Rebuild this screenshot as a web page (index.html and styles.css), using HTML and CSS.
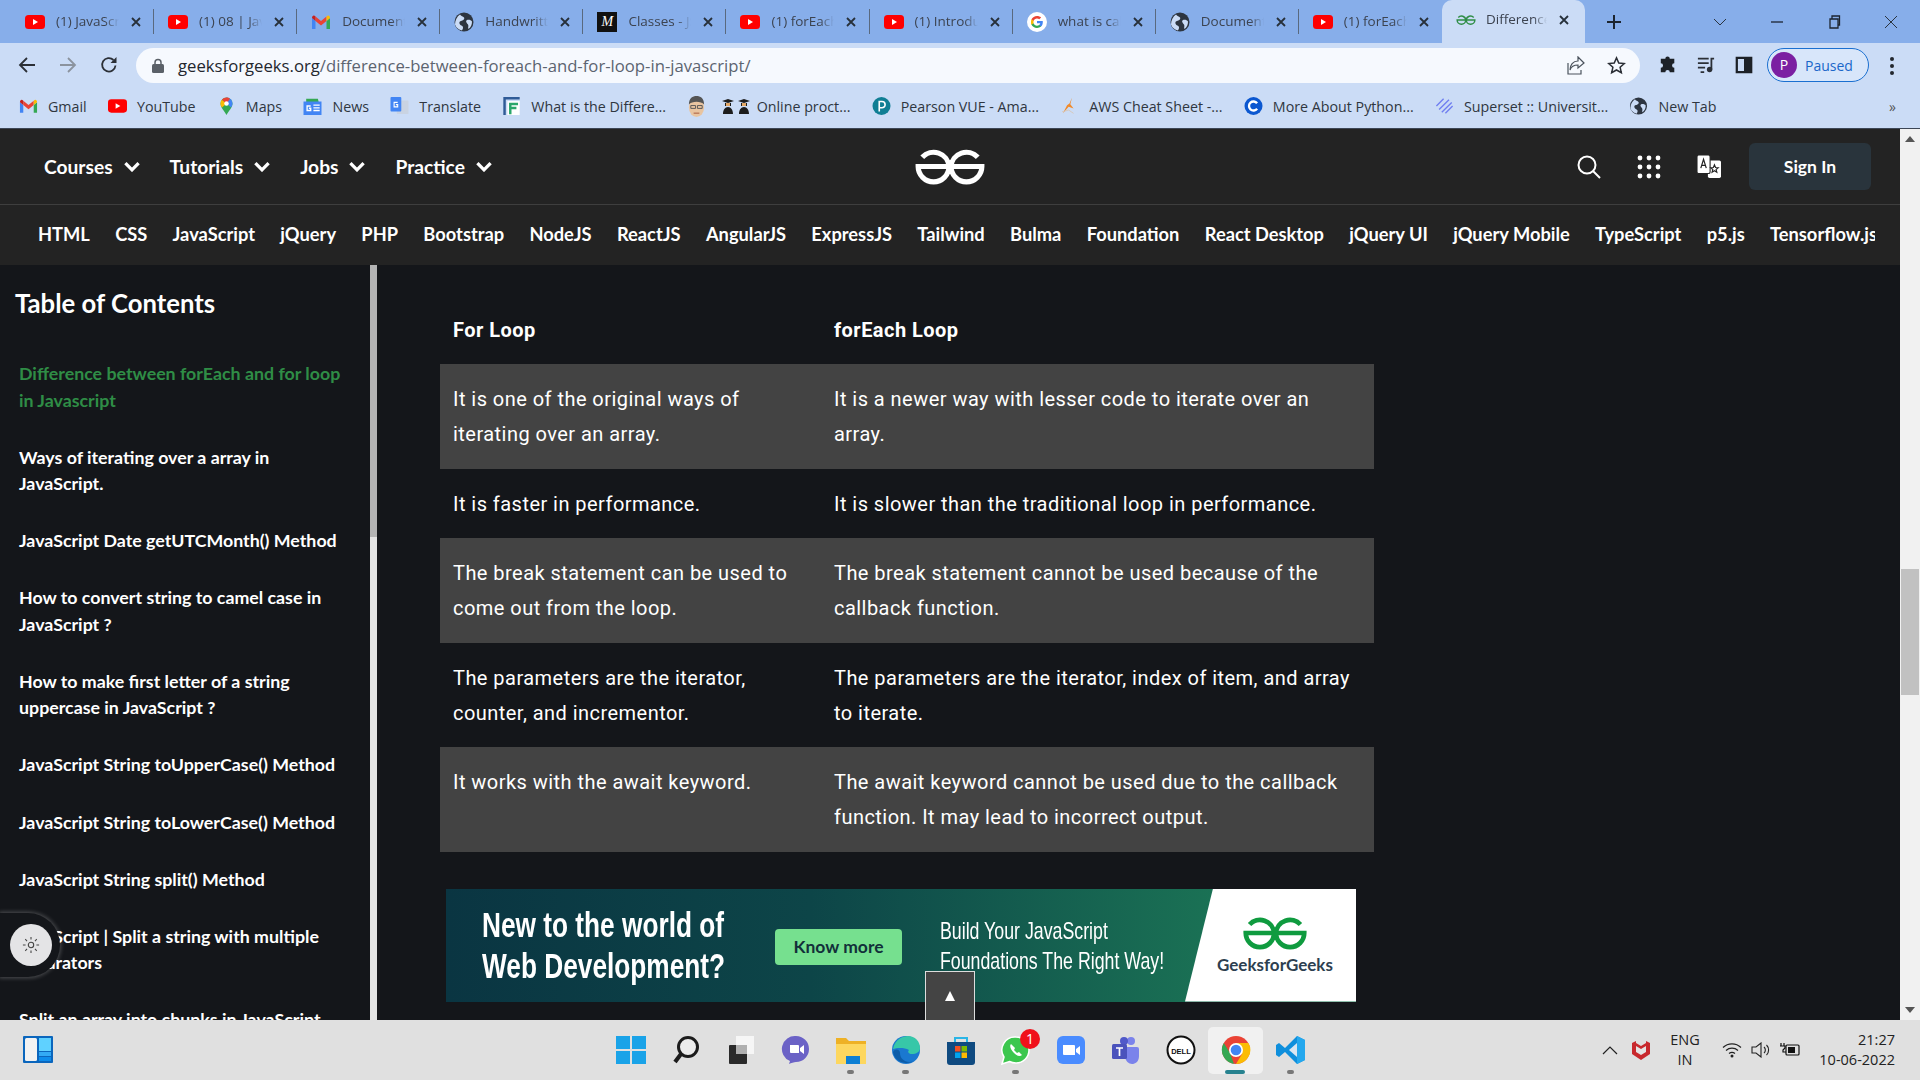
FILE: index.html
```html
<!DOCTYPE html>
<html lang="en">
<head>
<meta charset="utf-8">
<title>Difference between forEach and for loop in Javascript</title>
<link rel="stylesheet" href="styles.css">
</head>
<body>
<svg class="defs" aria-hidden="true">
  <defs>
    <symbol id="yt" viewBox="0 0 20 14"><rect width="20" height="14" rx="3.5" fill="#f00"/><path d="M8 4l5 3-5 3z" fill="#fff"/></symbol>
    <symbol id="gmail" viewBox="0 0 20 16"><path d="M1 4v11h3.5V7z" fill="#4285f4"/><path d="M19 4v11h-3.5V7z" fill="#34a853"/><path d="M15.500 2.500L10 7 4.500 2.500 4.500 7 10 11.500 15.500 7z" fill="#ea4335"/><path d="M1 4c0-2.500 2-3.500 3.500-1.500v4.500z" fill="#c5221f"/><path d="M19 4c0-2.500-2-3.500-3.500-1.500v4.500z" fill="#fbbc04"/></symbol>
    <symbol id="globe" viewBox="0 0 20 20"><circle cx="10" cy="10" r="9.500" fill="#2d3540"/><path d="M6 2.500c1 2 3 1.500 4 3s-1 3-3 3.500-2 2-1 3.500 3 1 3 3-1 2-1 3c-3-.5-6-3-7-6 0-4 2-8 5-10zM13 8c2-.5 4 0 5 1.500 0 3-1 5.500-3.500 7.500-1-1 .5-3-.5-4.500s-3-3-1-4.500z" fill="#cbdcf6"/></symbol>
    <symbol id="gfg" viewBox="0 0 70 36"><path d="M62 9A15 15 0 0 0 36 18 15 15 0 0 0 66 18H36M8 9A15 15 0 0 1 34 18 15 15 0 0 1 4 18H34" fill="none" stroke="currentColor" stroke-width="5"/></symbol>
    <symbol id="close" viewBox="0 0 12 12"><path d="M2 2l8 8M10 2l-8 8" stroke="#27303a" stroke-width="1.800" fill="none"/></symbol>
    <symbol id="chev" viewBox="0 0 16 10"><path d="M2 2l6 6 6-6" stroke="#fff" stroke-width="3" fill="none"/></symbol>
  </defs>
</svg>
<div class="window">
  <header class="tabstrip">
    <div class="tab"><svg class="fav"><use href="#yt"/></svg><span class="title">(1) JavaScript</span><svg class="x"><use href="#close"/></svg></div>
    <div class="tab"><svg class="fav"><use href="#yt"/></svg><span class="title">(1) 08 | JavaS</span><svg class="x"><use href="#close"/></svg></div>
    <div class="tab"><svg class="fav"><use href="#gmail"/></svg><span class="title">Document</span><svg class="x"><use href="#close"/></svg></div>
    <div class="tab"><svg class="fav"><use href="#globe"/></svg><span class="title">Handwritten</span><svg class="x"><use href="#close"/></svg></div>
    <div class="tab"><span class="fav-m">M</span><span class="title">Classes - JS</span><svg class="x"><use href="#close"/></svg></div>
    <div class="tab"><svg class="fav"><use href="#yt"/></svg><span class="title">(1) forEach</span><svg class="x"><use href="#close"/></svg></div>
    <div class="tab"><svg class="fav"><use href="#yt"/></svg><span class="title">(1) Introduc</span><svg class="x"><use href="#close"/></svg></div>
    <div class="tab"><svg class="fav" viewBox="0 0 20 20"><circle cx="10" cy="10" r="10" fill="#fff"/><path d="M15.800 10.200c0-.5 0-.9-.1-1.300H10v2.400h3.300c-.2.800-.6 1.400-1.200 1.800v1.500h2c1.100-1.100 1.700-2.600 1.700-4.400z" fill="#4285f4"/><path d="M10 16c1.600 0 3-.5 4.100-1.400l-2-1.500c-.6.400-1.300.6-2.100.6-1.600 0-3-1-3.400-2.500H4.500v1.600C5.500 14.700 7.600 16 10 16z" fill="#34a853"/><path d="M6.600 11.200c-.2-.8-.2-1.600 0-2.400V7.200H4.500c-.7 1.500-.7 4.100 0 5.600z" fill="#fbbc05"/><path d="M10 6.400c.9 0 1.700.3 2.300.9L14.100 5.500C13 4.500 11.600 4 10 4 7.600 4 5.500 5.300 4.500 7.200l2.100 1.600C7 7.400 8.400 6.400 10 6.400z" fill="#ea4335"/></svg><span class="title">what is call</span><svg class="x"><use href="#close"/></svg></div>
    <div class="tab"><svg class="fav"><use href="#globe"/></svg><span class="title">Document</span><svg class="x"><use href="#close"/></svg></div>
    <div class="tab last"><svg class="fav"><use href="#yt"/></svg><span class="title">(1) forEach</span><svg class="x"><use href="#close"/></svg></div>
    <div class="tab active"><svg class="fav gfgfav"><use href="#gfg"/></svg><span class="title">Difference</span><svg class="x"><use href="#close"/></svg></div>
    <svg class="newtab" viewBox="0 0 16 16"><path d="M8 1v14M1 8h14" stroke="#1c2530" stroke-width="2"/></svg>
    <div class="winctl">
      <svg class="wc wc-drop" viewBox="0 0 14 8"><path d="M1 1l6 6 6-6" stroke="#2a3440" fill="none"/></svg>
      <svg class="wc wc-min" viewBox="0 0 14 8"><path d="M1 4h12" stroke="#1c2530" stroke-width="1.300"/></svg>
      <svg class="wc wc-max" viewBox="0 0 14 14"><path d="M3 4h8v9H3zM5 4V1h7.500v9H11" stroke="#1c2530" stroke-width="1.300" fill="none"/></svg>
      <svg class="wc wc-close" viewBox="0 0 14 14"><path d="M1 1l12 12M13 1L1 13" stroke="#2a3440" fill="none"/></svg>
    </div>
  </header>

  <div class="toolbar">
    <svg class="tb-btn" viewBox="0 0 18 18"><path d="M17 9H2M9 2L2 9l7 7" stroke="#2b2f36" stroke-width="1.800" fill="none"/></svg>
    <svg class="tb-btn dim" viewBox="0 0 18 18"><path d="M1 9h15M9 2l7 7-7 7" stroke="#8b939e" stroke-width="1.800" fill="none"/></svg>
    <svg class="tb-btn" viewBox="0 0 18 18"><path d="M15.500 9.500A6.700 6.700 0 1 1 13.500 4" stroke="#2b2f36" stroke-width="1.800" fill="none"/><path d="M16.500 1v6h-6z" fill="#2b2f36"/></svg>
    <div class="omnibox">
      <svg class="lock" viewBox="0 0 12 15"><path d="M3 7V4.500a3 3 0 0 1 6 0V7" stroke="#5a6068" stroke-width="1.500" fill="none"/><rect y="6" width="12" height="9" rx="1.500" fill="#5a6068"/></svg>
      <span class="url"><b>geeksforgeeks.org</b>/difference-between-foreach-and-for-loop-in-javascript/</span>
      <svg class="omni-ic" viewBox="0 0 20 20"><path d="M12 1l6 6-6 5V9C7 9 5 11 4 14c0-5 3-9 8-9zM2 7v11h13v-4" stroke="#4a525c" stroke-width="1.200" fill="none"/></svg>
      <svg class="omni-ic star" viewBox="0 0 20 20"><path d="M10 2l2.400 5.400 5.800.6-4.400 3.900 1.300 5.700L10 14.700l-5.100 2.900 1.300-5.700L1.800 8l5.800-.6z" stroke="#2b2f36" stroke-width="1.600" fill="none"/></svg>
    </div>
    <svg class="tb-ext" viewBox="0 0 20 20"><path d="M7 3a2.500 2.500 0 0 1 5 0h5v5a2.500 2.500 0 0 0 0 5v5h-5a2.500 2.500 0 0 0-5 0H2v-5a2.500 2.500 0 0 0 0-5V3z" fill="#1d2127"/></svg>
    <svg class="tb-ext" viewBox="0 0 20 20"><path d="M1 3h12M1 8h12M1 13h8M4 18h4" stroke="#2b2f36" stroke-width="2" fill="none"/><path d="M15 3h4M16 3v12" stroke="#2b2f36" stroke-width="2"/><circle cx="14" cy="15" r="3" fill="#2b2f36"/></svg>
    <svg class="tb-ext" viewBox="0 0 20 20"><path d="M2 2h16v16H2z" stroke="#1d2127" stroke-width="2.500" fill="none"/><rect x="10" y="2" width="8" height="16" fill="#1d2127"/></svg>
    <div class="profile"><span class="avatar">P</span><span class="paused">Paused</span></div>
    <div class="menu"><i></i><i></i><i></i></div>
  </div>

  <nav class="bookmarks">
    <span class="bm"><svg class="bi"><use href="#gmail"/></svg>Gmail</span>
    <span class="bm"><svg class="bi"><use href="#yt"/></svg>YouTube</span>
    <span class="bm"><svg class="bi" viewBox="0 0 18 24"><path d="M9 24C6 18 1 14 1 8.500a8 8 0 0 1 16 0C17 14 12 18 9 24z" fill="#34a853"/><path d="M9 .5a8 8 0 0 1 8 8c0 2-.8 3.700-2 5.500L9 8.500z" fill="#4285f4"/><path d="M3 3.500L9 8.500 3 14C1.500 12 1 10 1 8.500c0-2 .8-3.700 2-5z" fill="#fbbc04"/><path d="M3 3.500C4.500 1.500 6.500.5 9 .5c2 0 3.500.7 4.700 1.800L9 8.500z" fill="#ea4335"/><circle cx="9" cy="8.500" r="3" fill="#fff"/></svg>Maps</span>
    <span class="bm"><svg class="bi" viewBox="0 0 20 20"><path d="M3 2h13l1 4H3z" fill="#34a853"/><rect y="5" width="20" height="15" fill="#4285f4"/><path d="M11 9h7M11 12h7M11 15h7" stroke="#fff" stroke-width="1.500"/><path d="M8 10H4v5h4v-2.500H6" stroke="#fff" stroke-width="1.500" fill="none"/></svg>News</span>
    <span class="bm"><svg class="bi" viewBox="0 0 20 20"><rect x="7" y="4" width="13" height="15" rx="1" fill="#c9d3e2"/><rect width="12" height="16" rx="1" fill="#4285f4"/><path d="M8 6H4v5h4V8.500H6" stroke="#fff" stroke-width="1.200" fill="none"/></svg>Translate</span>
    <span class="bm"><svg class="bi" viewBox="0 0 20 22"><path d="M0 0h20v3H3v19H0z" fill="#2f5b97"/><path d="M5 5h15v17H5z" fill="#fff"/><path d="M7 7h11v3h-8v2h6v3h-6v6H7z" fill="#2aa66b"/></svg>What is the Differe...</span>
    <span class="bm"><svg class="face" viewBox="0 0 20 24"><ellipse cx="10" cy="13" rx="8" ry="10" fill="#e8c4a0"/><path d="M2 10C2 3 6 1 10 1s8 2 8 9c-3-4-13-4-16 0z" fill="#555"/><path d="M4 11h5v3H4zM11 11h5v3h-5z" fill="none" stroke="#555"/><path d="M7 19h6" stroke="#a4553a"/></svg></span>
    <span class="bm tight"><svg class="grad" viewBox="0 0 30 16"><path d="M1 3l6-2 6 2-6 2zM4 5h6v3H4zM2 16c0-4 2-7 5-7s5 3 5 7zM17 3l6-2 6 2-6 2zM20 5h6v3h-6zM18 16c0-4 2-7 5-7s5 3 5 7z" fill="#1d1d1d"/><path d="M5 5h4v3H5zM21 5h4v3h-4z" fill="#e3a867"/></svg>Online proct...</span>
    <span class="bm"><svg class="bi" viewBox="0 0 20 20"><circle cx="10" cy="10" r="10" fill="#107e94"/><path d="M7.500 16V5h3a3.500 3.500 0 0 1 0 7H8" stroke="#fff" stroke-width="1.800" fill="none"/></svg>Pearson VUE - Ama...</span>
    <span class="bm"><svg class="bi" viewBox="0 0 20 22"><path d="M13 1l-2 8 4 5-6-2-7 8 5-10 3-2z" fill="#f08a2b"/><path d="M1 18l8-2 6 4" stroke="#d8c4b0" fill="none"/></svg>AWS Cheat Sheet -...</span>
    <span class="bm"><svg class="bi" viewBox="0 0 20 20"><circle cx="10" cy="10" r="10" fill="#0b57d0"/><path d="M14 7a5 5 0 1 0 0 6" stroke="#fff" stroke-width="2.600" fill="none"/></svg>More About Python...</span>
    <span class="bm"><svg class="bi" viewBox="0 0 20 20"><path d="M1 10l8-8M4 14L15 3M7 17L18 6M11 18l8-8" stroke="#6f7ef0" stroke-width="1.500" fill="none"/></svg>Superset :: Universit...</span>
    <span class="bm"><svg class="bi"><use href="#globe"/></svg>New Tab</span>
    <span class="bm-more">»</span>
  </nav>

  <div class="page">
    <div class="site">
      <div class="nav">
        <div class="nav-left">
          <span class="nav-item">Courses<svg class="chev"><use href="#chev"/></svg></span>
          <span class="nav-item">Tutorials<svg class="chev"><use href="#chev"/></svg></span>
          <span class="nav-item">Jobs<svg class="chev"><use href="#chev"/></svg></span>
          <span class="nav-item">Practice<svg class="chev"><use href="#chev"/></svg></span>
        </div>
        <svg class="logo"><use href="#gfg"/></svg>
        <div class="nav-right">
          <svg class="nav-ic" viewBox="0 0 24 24"><circle cx="10" cy="10" r="8.500" stroke="#fff" stroke-width="2" fill="none"/><path d="M16 16l7 7" stroke="#fff" stroke-width="2"/></svg>
          <svg class="nav-ic" viewBox="0 0 24 24" fill="#fff"><circle cx="3" cy="3" r="2.400"/><circle cx="12" cy="3" r="2.400"/><circle cx="21" cy="3" r="2.400"/><circle cx="3" cy="12" r="2.400"/><circle cx="12" cy="12" r="2.400"/><circle cx="21" cy="12" r="2.400"/><circle cx="3" cy="21" r="2.400"/><circle cx="12" cy="21" r="2.400"/><circle cx="21" cy="21" r="2.400"/></svg>
          <svg class="nav-ic trans" viewBox="0 0 22 22"><rect x="10" y="5" width="12" height="16" rx="1.500" fill="#fff"/><rect width="12" height="17" rx="1.500" fill="#fff" stroke="#232323"/><path d="M3.500 12L6 4l2.500 8M4.500 9.500h3" stroke="#232323" stroke-width="1.100" fill="none"/><path d="M16 9l1 2.500 2.500.2-2 1.600.7 2.500-2.200-1.400-2.200 1.400.7-2.500-2-1.600 2.500-.2z" fill="none" stroke="#232323"/></svg>
          <span class="signin">Sign In</span>
        </div>
      </div>
      <div class="subnav">
        <div class="subnav-in">
          <span>HTML</span><span>CSS</span><span>JavaScript</span><span>jQuery</span><span>PHP</span><span>Bootstrap</span><span>NodeJS</span><span>ReactJS</span><span>AngularJS</span><span>ExpressJS</span><span>Tailwind</span><span>Bulma</span><span>Foundation</span><span>React Desktop</span><span>jQuery UI</span><span>jQuery Mobile</span><span>TypeScript</span><span>p5.js</span><span>Tensorflow.js</span>
        </div>
      </div>
      <div class="body">
        <aside class="toc">
          <div class="toc-list">
            <h2>Table of Contents</h2>
            <a class="cur">Difference between forEach and for loop in Javascript</a>
            <a>Ways of iterating over a array in JavaScript.</a>
            <a>JavaScript Date getUTCMonth() Method</a>
            <a>How to convert string to camel case in JavaScript ?</a>
            <a>How to make first letter of a string uppercase in JavaScript ?</a>
            <a>JavaScript String toUpperCase() Method</a>
            <a>JavaScript String toLowerCase() Method</a>
            <a>JavaScript String split() Method</a>
            <a>JavaScript | Split a string with multiple separators</a>
            <a>Split an array into chunks in JavaScript</a>
          </div>
          <div class="toc-track"><div class="toc-thumb"></div></div>
        </aside>
        <main class="article">
          <table class="cmp">
            <thead><tr><th>For Loop</th><th>forEach Loop</th></tr></thead>
            <tbody>
              <tr><td>It is one of the original ways of iterating over an array.</td><td>It is a newer way with lesser code to iterate over an array.</td></tr>
              <tr><td>It is faster in performance.</td><td>It is slower than the traditional loop in performance.</td></tr>
              <tr><td>The break statement can be used to come out from the loop.</td><td>The break statement cannot be used because of the callback function.</td></tr>
              <tr><td>The parameters are the iterator, counter, and incrementor.</td><td>The parameters are the iterator, index of item, and array to iterate.</td></tr>
              <tr><td>It works with the await keyword.</td><td>The await keyword cannot be used due to the callback function. It may lead to incorrect output.</td></tr>
            </tbody>
          </table>
          <div class="banner">
            <div class="b-head">New to the world of<br>Web Development?</div>
            <div class="b-btn">Know more</div>
            <div class="b-sub">Build Your JavaScript<br>Foundations The Right Way!</div>
            <div class="b-brand"><svg class="b-logo"><use href="#gfg"/></svg><span>GeeksforGeeks</span></div>
          </div>
          <div class="totop"><svg viewBox="0 0 12 12"><path d="M6 1l5 10H1z" fill="#fff"/></svg></div>
        </main>
      </div>
      <div class="theme"><span class="theme-knob"><svg viewBox="0 0 20 20"><circle cx="10" cy="10" r="3" fill="none" stroke="#444" stroke-width="1.200"/><path d="M10 1v3M10 16v3M1 10h3M16 10h3M3.600 3.600l2 2M14.400 14.400l2 2M3.600 16.400l2-2M14.400 5.600l2-2" stroke="#444" stroke-width="1.200"/></svg></span></div>
    </div>
    <div class="pagebar">
      <svg class="arrow" viewBox="0 0 10 6"><path d="M5 0l5 6H0z" fill="#555"/></svg>
      <div class="pagebar-track"><div class="pagebar-thumb"></div></div>
      <svg class="arrow" viewBox="0 0 10 6"><path d="M5 6L0 0h10z" fill="#555"/></svg>
    </div>
  </div>

  <footer class="taskbar">
    <svg class="widgets" viewBox="0 0 30 27"><rect width="30" height="27" rx="1" fill="#0b66bd"/><rect x="2" y="2" width="12" height="23" rx="1.500" fill="#f2f2f2"/><rect x="16" y="2" width="12" height="13" fill="#5fd1ff"/><rect x="16" y="16" width="12" height="4" fill="#33aaf5"/><rect x="16" y="21" width="12" height="4" fill="#0e8ceb"/></svg>
    <div class="tb-apps">
      <span class="app"><svg viewBox="0 0 30 30"><path d="M0 1h14v13H0zM16 1h14v13H16zM0 16h14v13H0zM16 16h14v13H16z" fill="#1aa3e8"/></svg></span>
      <span class="app"><svg viewBox="0 0 30 30"><circle cx="17" cy="12" r="9.500" stroke="#1c1c1c" stroke-width="3" fill="#fff" fill-opacity=".4"/><path d="M10 19l-6 8" stroke="#1c1c1c" stroke-width="4"/></svg></span>
      <span class="app"><svg viewBox="0 0 30 30"><rect x="10" y="1" width="18" height="18" fill="#f6f6f6"/><rect x="3" y="10" width="18" height="19" rx="1" fill="#2a2a2a"/><rect x="10" y="10" width="11" height="9" fill="#b0b0b0"/></svg></span>
      <span class="app"><svg viewBox="0 0 30 30"><path d="M15 1a13 13 0 0 1 0 26c-2 0-5 1-7 2l1-3A13 13 0 0 1 15 1z" fill="#6b62c6"/><path d="M9 10h8a1 1 0 0 1 1 1v7H10a1 1 0 0 1-1-1zM19 13l4-3v9l-4-3z" fill="#fff"/></svg></span>
      <span class="app dot"><svg viewBox="0 0 30 30"><path d="M0 3h10l3 3h17v23H0z" fill="#eeb125"/><path d="M0 9h30v20H0z" fill="#fdd75f"/><rect x="10" y="21" width="14" height="8" fill="#0d7fd4"/></svg></span>
      <span class="app dot"><svg viewBox="0 0 30 30"><circle cx="15" cy="15" r="14" fill="#1a78d0"/><path d="M2 14C4 4 12 1 17 1c7 0 12 5 12 12 0 4-4 6-8 6-3 0-5-2-3-4-5-3-13-2-16-1z" fill="#37c7a8"/><path d="M9 18c0 6 6 11 14 8-7 4-19 2-21-9 2-4 7-3 7 1z" fill="#0c5ca8"/></svg></span>
      <span class="app"><svg viewBox="0 0 30 30"><path d="M9 8V3h12v5" stroke="#2ab5e6" stroke-width="2" fill="none"/><path d="M1 7h28v20a3 3 0 0 1-3 3H4a3 3 0 0 1-3-3z" fill="#0f4a80"/><rect x="9" y="11" width="5.500" height="5.500" fill="#f25022"/><rect x="15.500" y="11" width="5.500" height="5.500" fill="#7fba00"/><rect x="9" y="17.500" width="5.500" height="5.500" fill="#00a4ef"/><rect x="15.500" y="17.500" width="5.500" height="5.500" fill="#ffb900"/></svg></span>
      <span class="app dot"><svg viewBox="0 0 30 30"><path d="M15 2a13 13 0 0 1 0 26c-2.500 0-4.500-.5-6.500-1.500L1 29l2-7A13 13 0 0 1 15 2z" fill="#3cc74e" stroke="#fff" stroke-width="1.500"/><path d="M10 9c-2 2 0 6 3 9s6 4 8 2l-3-3-2 1-3-3 1-2z" fill="#fff"/></svg><b class="badge">1</b></span>
      <span class="app"><svg viewBox="0 0 30 30"><rect x="1" y="1" width="28" height="28" rx="6" fill="#4a8cff"/><path d="M7 10h11a1 1 0 0 1 1 1v9H8a1 1 0 0 1-1-1zM20 14l4-3v9l-4-3z" fill="#fff"/></svg></span>
      <span class="app"><svg viewBox="0 0 30 30"><circle cx="20" cy="6" r="4" fill="#7b83eb"/><path d="M14 12h12a2 2 0 0 1 2 2v7c0 6-4 8-7 8s-7-3-7-8z" fill="#7b83eb"/><circle cx="13" cy="6" r="4" fill="#5059c9"/><rect x="1" y="9" width="15" height="15" rx="1.500" fill="#4b53bc"/><path d="M5 13h7M8.500 13v8" stroke="#fff" stroke-width="1.700"/></svg></span>
      <span class="app"><svg viewBox="0 0 30 30"><circle cx="15" cy="15" r="13.500" fill="#fff" stroke="#111" stroke-width="2"/><text x="15" y="18.500" class="dell">DELL</text></svg></span>
      <span class="app cur-app"><svg viewBox="0 0 30 30"><circle cx="15" cy="15" r="14" fill="#ea4335"/><path d="M15 29A14 14 0 0 1 2.800 8L9 18l4 11z" fill="#34a853"/><path d="M15 8h12.400A14 14 0 0 1 15 29l6-10z" fill="#fbbc04"/><circle cx="15" cy="15" r="7" fill="#fff"/><circle cx="15" cy="15" r="5.300" fill="#4285f4"/></svg></span>
      <span class="app dot"><svg viewBox="0 0 30 30"><path d="M21 1l8 4v20l-8 4L9 17l-6 5-3-2v-10l3-2 6 5z" fill="#0f8fdc"/><path d="M21 8v14l-8-7z" fill="#d9e6f2"/><path d="M21 1l8 4v20l-8 4z" fill="#24a8ee"/></svg></span>
    </div>
    <div class="tray">
      <svg class="t-chev" viewBox="0 0 16 9"><path d="M1 8l7-7 7 7" stroke="#222" stroke-width="1.200" fill="none"/></svg>
      <svg class="t-mc" viewBox="0 0 18 20"><path d="M0 3l4-2v2l5 3 5-3V1l4 2v11l-9 6-9-6z" fill="#c8282d"/><path d="M4 6v6l5 3 5-3V6l-5 3z" fill="#e4e4e4"/></svg>
      <div class="lang"><span>ENG</span><span>IN</span></div>
      <svg class="t-ic" viewBox="0 0 20 16"><path d="M1 5.500a13 13 0 0 1 18 0M4 8.500a9 9 0 0 1 12 0M7 11.500a5 5 0 0 1 6 0" stroke="#222" stroke-width="1.200" fill="none"/><circle cx="10" cy="14" r="1.500" fill="#222"/></svg>
      <svg class="t-ic" viewBox="0 0 20 16"><path d="M1 5h4l5-4v14l-5-4H1z" stroke="#222" stroke-width="1.100" fill="none"/><path d="M13 5a4 4 0 0 1 0 6M15.500 3a7 7 0 0 1 0 10" stroke="#222" stroke-width="1.100" fill="none"/></svg>
      <svg class="t-ic" viewBox="0 0 20 16"><rect x="6" y="3" width="13" height="10" rx="1" fill="none" stroke="#111" stroke-width="1.200"/><rect x="8" y="5" width="7" height="6" fill="#111"/><path d="M1 1v3M4 1v3M0 4h5v2l-2 2v2h3" stroke="#111" stroke-width="1.200" fill="none"/></svg>
      <div class="clock"><span>21:27</span><span>10-06-2022</span></div>
    </div>
  </footer>
</div>
</body>
</html>
```
FILE: styles.css
```css
* { box-sizing: border-box; }
html, body { margin: 0; padding: 0; overflow: hidden; }
body { font-family: "Open Sans", "Noto Sans", sans-serif; }
.defs { position: absolute; width: 0; height: 0; }
.window { width: 1920px; height: 1080px; display: flex; flex-direction: column; overflow: hidden; position: relative; }

/* tabs */
.tabstrip { height: 43px; flex: none; background: #87aeea; display: flex; align-items: center; padding-left: 11px; }
.tab { width: 143.1px; height: 25px; flex: none; display: flex; align-items: center; padding-left: 14px; border-right: 1px solid #59697f; }
.tab.last { border-right: 0; }
.tab.active { height: 43px; align-self: flex-end; background: #cbdcf6; border-right: 0; border-radius: 10px 10px 0 0; padding-bottom: 4px; }
.tab.active .title { width: 61px; margin-left: 10px; }
.fav { width: 20px; height: 20px; flex: none; }
.gfgfav { color: #2f8d46; height: 14px; }
.fav-m { width: 20px; height: 20px; flex: none; background: #111; color: #fff; font: italic 14px/20px "Liberation Serif", serif; text-align: center; }
.title { width: 63px; margin: -2px 0 0 11px; font-size: 13.500px; line-height: 18px; color: #3c4350; white-space: nowrap; overflow: hidden; -webkit-mask-image: linear-gradient(90deg, #000 78%, transparent); mask-image: linear-gradient(90deg, #000 78%, transparent); }
.x { width: 12px; height: 12px; margin-left: 11px; flex: none; }
.newtab { width: 16px; height: 16px; margin-left: 21px; flex: none; }
.winctl { display: flex; align-items: center; margin-left: auto; padding-right: 22px; gap: 43px; }
.wc { width: 14px; height: 14px; flex: none; }

/* toolbar */
.toolbar { height: 41px; flex: none; background: #cbdcf6; display: flex; align-items: flex-start; padding: 5px 0 0 18px; }
.tb-btn { width: 18px; height: 18px; margin: 8px 23px 0 0; flex: none; }
.omnibox { width: 1504px; height: 35px; margin-left: -5px; background: #f6f9fe; border-radius: 18px; display: flex; align-items: center; padding: 0 14px 0 16px; }
.lock { width: 12px; height: 15px; flex: none; }
.url { margin-left: 14px; font-size: 16.700px; color: #5c6470; white-space: nowrap; flex: 1; }
.url b { font-weight: 400; color: #23272e; }
.omni-ic { width: 20px; height: 20px; margin-left: 21px; flex: none; }
.omni-ic.star { width: 19px; height: 19px; }
.tb-ext { width: 18px; height: 18px; margin: 8px 0 0 20px; flex: none; }
.omnibox + .tb-ext { margin-left: 19px; }
.profile { width: 102px; height: 34px; margin-left: 14px; border: 1px solid #1a6fd0; border-radius: 17px; display: flex; align-items: center; padding-left: 3px; gap: 8px; background: #d8e6fa; flex: none; }
.avatar { width: 26px; height: 26px; border-radius: 50%; background: #7b1fa2; color: #fff; font-size: 14px; line-height: 26px; text-align: center; }
.paused { font-size: 14px; color: #1a67c9; }
.menu { display: flex; flex-direction: column; gap: 3px; margin: 9px 0 0 21px; }
.menu i { width: 4px; height: 4px; border-radius: 50%; background: #23272e; display: block; }

/* bookmarks */
.bookmarks { height: 45px; flex: none; background: #cbdcf6; display: flex; align-items: center; padding: 0 0 0 19px; gap: 21.300px; border-bottom: 1px solid #3c4656; font-size: 14.250px; color: #2f3640; position: relative; }
.bm { display: flex; align-items: center; gap: 10px; white-space: nowrap; }
.bm.tight { gap: 0; margin-left: -7px; }
.bi { width: 19px; height: 18px; flex: none; }
.face { width: 19px; height: 23px; flex: none; }
.grad { width: 30px; height: 16px; margin-right: 6px; flex: none; }
.bm-more { margin-left: auto; padding-right: 24px; font-size: 14px; color: #555; }

/* page */
.page { height: 891px; flex: none; display: flex; }
.site { width: 1900px; flex: none; display: flex; flex-direction: column; position: relative; font-family: "Lato", sans-serif; }
.pagebar { width: 20px; flex: none; background: #f1f1f1; display: flex; flex-direction: column; align-items: center; }
.arrow { width: 10px; height: 6px; margin: 7px 0; flex: none; }
.pagebar-track { flex: 1; padding-top: 420px; width: 100%; }
.pagebar-thumb { height: 126px; margin: 0 1px; background: #c1c1c1; }

.nav { height: 76px; flex: none; background: #232323; border-bottom: 1px solid #3e3e3e; display: flex; align-items: center; padding: 0 29px 0 44px; color: #fff; position: relative; }
.nav-left { display: flex; gap: 29px; width: 870px; }
.nav-item { display: flex; align-items: center; gap: 10px; font-size: 19.200px; font-weight: 700; }
.chev { width: 18px; height: 11px; flex: none; }
.logo { width: 72px; height: 37px; color: #fff; flex: none; }
.nav-right { margin-left: auto; display: flex; align-items: center; gap: 36px; }
.nav-ic { width: 24px; height: 24px; flex: none; }
.trans { height: 24px; }
.signin { width: 122px; height: 47px; margin-left: -8px; background: #29343c; border-radius: 6px; display: flex; align-items: center; justify-content: center; font-size: 17.500px; font-weight: 700; }

.subnav { height: 60px; flex: none; background: #232323; color: #fff; padding: 0 25px 2px 38px; display: flex; align-items: center; }
.subnav-in { display: flex; gap: 25.300px; overflow: hidden; white-space: nowrap; flex: 1; min-width: 0; font-size: 18.300px; line-height: 26px; font-weight: 700; }
.subnav-in span { flex: none; }

.body { flex: 1; min-height: 0; display: flex; background: #14161a; color: #fff; }
.toc { width: 377px; flex: none; display: flex; overflow: hidden; }
.toc-list { width: 370px; flex: none; }
.toc-list h2 { margin: 23px 0 42px 15px; font-size: 25.700px; line-height: 30px; font-weight: 700; }
.toc-list a { display: block; margin: 0 21px 30.600px 19px; font-size: 17.800px; line-height: 26.500px; font-weight: 700; }
.toc-list a.cur { color: #2f8d46; }
.toc-track { width: 7px; flex: none; background: #e4e4e4; }
.toc-thumb { height: 272px; background: #b4b4b4; }

.article { flex: 1; padding: 31px 0 0 63px; font-family: "Roboto", sans-serif; }
.cmp { width: 934px; border-collapse: collapse; table-layout: fixed; font-size: 20px; line-height: 35px; letter-spacing: .46px; }
.cmp th:first-child { width: 381px; }
.cmp th { text-align: left; padding: 17px 13px 16px; font-weight: 700; }
.cmp td { padding: 18px 13px 16.500px; vertical-align: top; }
.cmp tbody tr:nth-child(odd) { background: #434343; }
.banner { width: 910px; height: 113px; margin: 37px 0 0 6px; display: flex; position: relative; align-items: center; background: linear-gradient(90deg, #0a3542 0%, #0d4548 40%, #1f8159 100%); color: #fff; font-family: "Liberation Sans", sans-serif; overflow: hidden; }
.b-head { width: 256px; margin-left: 36px; font-size: 35px; line-height: 41px; font-weight: 700; flex: none; white-space: nowrap; transform: scaleX(.75); transform-origin: left center; }
.b-btn { width: 127px; height: 36px; margin: 3px 0 0 37px; background: #76e08f; border-radius: 4px; color: #12303a; font: 700 17.500px/36px "Lato", sans-serif; text-align: center; flex: none; }
.b-sub { margin: 2px 0 0 38px; font-size: 24px; line-height: 30px; white-space: nowrap; flex: none; transform: scaleX(.74); transform-origin: left center; }
.b-brand { position: absolute; right: 0; top: 0; width: 171px; height: 113px; background: #fff; clip-path: polygon(28px 0, 100% 0, 100% 100%, 0 100%); display: flex; flex-direction: column; align-items: center; justify-content: center; padding-left: 9px; color: #2d3f50; font: 700 17px/20px "Lato", sans-serif; }
.b-logo { width: 66px; height: 34px; color: #0f9b3f; margin-bottom: 5px; }
.totop { position: absolute; left: 925px; bottom: 0; width: 50px; height: 49px; background: #444; border: 1px solid #ddd; border-bottom: 0; display: flex; align-items: center; justify-content: center; }
.totop svg { width: 12px; height: 12px; }
.theme { position: absolute; left: 0; top: 784px; width: 60px; height: 64px; border-radius: 0 32px 32px 0; background: #14161a; box-shadow: 0 0 4px 1px rgba(255,255,255,.25); display: flex; align-items: center; justify-content: flex-end; padding-right: 8px; }
.theme-knob { width: 42px; height: 42px; border-radius: 50%; background: #e4e4e6; display: flex; align-items: center; justify-content: center; }
.theme-knob svg { width: 18px; height: 18px; }

/* taskbar */
.taskbar { height: 60px; flex: 1; background: #e0e0e0; display: flex; align-items: center; position: relative; padding-left: 23px; font-family: "Open Sans", sans-serif; color: #222; }
.widgets { width: 30px; height: 27px; flex: none; margin-top: -2px; }
.tb-apps { display: flex; margin-left: 550px; margin-top: 0; }
.app { width: 55px; height: 47px; display: flex; align-items: center; justify-content: center; position: relative; border-radius: 5px; flex: none; }
.app svg { width: 30px; height: 30px; }
.app.dot::after { content: ""; position: absolute; left: 24px; bottom: 0; width: 7px; height: 4px; border-radius: 2px; background: #777; }
.cur-app { background: #f1f1f1; }
.cur-app::after { content: ""; position: absolute; left: 17px; bottom: 0; width: 20px; height: 4px; border-radius: 2px; background: #27828f; }
.badge { position: absolute; right: 3px; top: 2px; width: 20px; height: 20px; border-radius: 50%; background: #f0101a; color: #fff; font-size: 14px; font-weight: 400; line-height: 20px; text-align: center; }
.dell { font: 700 7.500px "Liberation Sans", sans-serif; text-anchor: middle; fill: #111; }
.tray { display: flex; align-items: center; margin-left: auto; padding-right: 25px; }
.t-chev { width: 16px; height: 9px; flex: none; }
.t-mc { width: 18px; height: 20px; margin-left: 14px; flex: none; }
.lang { width: 50px; margin-left: 10px; display: flex; flex-direction: column; align-items: center; font-size: 14.500px; line-height: 20px; }
.t-ic { width: 20px; height: 16px; margin-left: 9px; flex: none; }
.lang + .t-ic { margin-left: 12px; }
.clock { margin-left: 19px; width: 76px; display: flex; flex-direction: column; align-items: flex-end; font-size: 14.500px; line-height: 20px; white-space: nowrap; }
```
